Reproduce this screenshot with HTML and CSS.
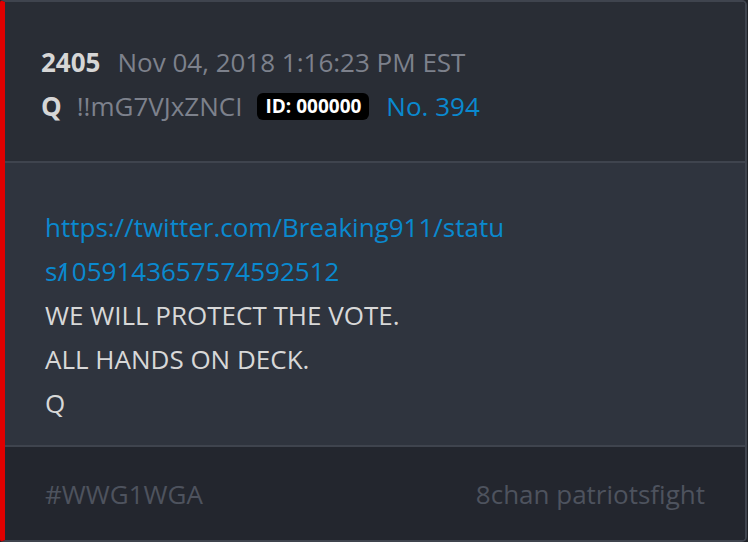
FILE: index.html
```html
<!DOCTYPE html>
<html>
<head>
<meta charset="utf-8">
<link rel="stylesheet" href="styles.css">
</head>
<body>
<div class="card">
  <div class="head">
    <div class="line"><span class="num">2405</span><span class="date">Nov 04, 2018 1:16:23 PM EST</span></div>
    <div class="line"><span class="num q">Q</span><span class="trip">!!mG7VJxZNCI</span><span class="id">ID: 000000</span><span class="no">No. 394</span></div>
  </div>
  <div class="body">
    <div class="link">https://twitter.com/Breaking911/status<span class="slash">/</span>1059143657574592512</div>
    <div>WE WILL PROTECT THE VOTE.</div>
    <div>ALL HANDS ON DECK.</div>
    <div>Q</div>
  </div>
  <div class="foot">
    <span>#WWG1WGA</span>
    <span>8chan patriotsfight</span>
  </div>
</div>
</body>
</html>
```
FILE: styles.css
```css
html, body {
  margin: 0;
  padding: 0;
  background: #1f2228;
}
body {
  width: 748px;
  height: 542px;
  font-family: "Open Sans", sans-serif;
  font-size: 26px;
  line-height: 44px;
}
.card {
  box-sizing: border-box;
  width: 747px;
  height: 542px;
  border: 2px solid #3f444e;
  border-left: 5px solid #e00000;
  border-radius: 3px 5px 5px 3px;
  display: flex;
  flex-direction: column;
  overflow: hidden;
}
.head {
  background: #292d35;
  padding: 38px 36px 33px;
  border-bottom: 2px solid #3f444e;
}
.line {
  display: flex;
  align-items: center;
  white-space: nowrap;
}
.num {
  font-weight: 700;
  color: #d6d6d6;
  margin-right: 17px;
}
.num.q {
  margin-right: 15px;
}
.date, .trip {
  color: #7d818c;
}
.trip { margin-right: 15px; }
.id {
  background: #000;
  color: #fff;
  font-weight: 700;
  font-size: 19px;
  line-height: 27px;
  padding: 0 8px;
  border-radius: 6px;
  margin-right: 17px;
}
.no {
  color: #0a89cf;
}
.body {
  flex: 1;
  background: #2f343e;
  padding: 42px 40px 20px;
  color: #d8d8d8;
  border-bottom: 2px solid #3f444e;
}
.link {
  color: #0a89cf;
  width: 462px;
  word-break: break-all;
}
.slash {
  margin-right: -10px;
}
.foot {
  background: #23262e;
  height: 93px;
  box-sizing: border-box;
  padding: 0 40px;
  display: flex;
  align-items: center;
  justify-content: space-between;
  color: #4e535e;
}
```
